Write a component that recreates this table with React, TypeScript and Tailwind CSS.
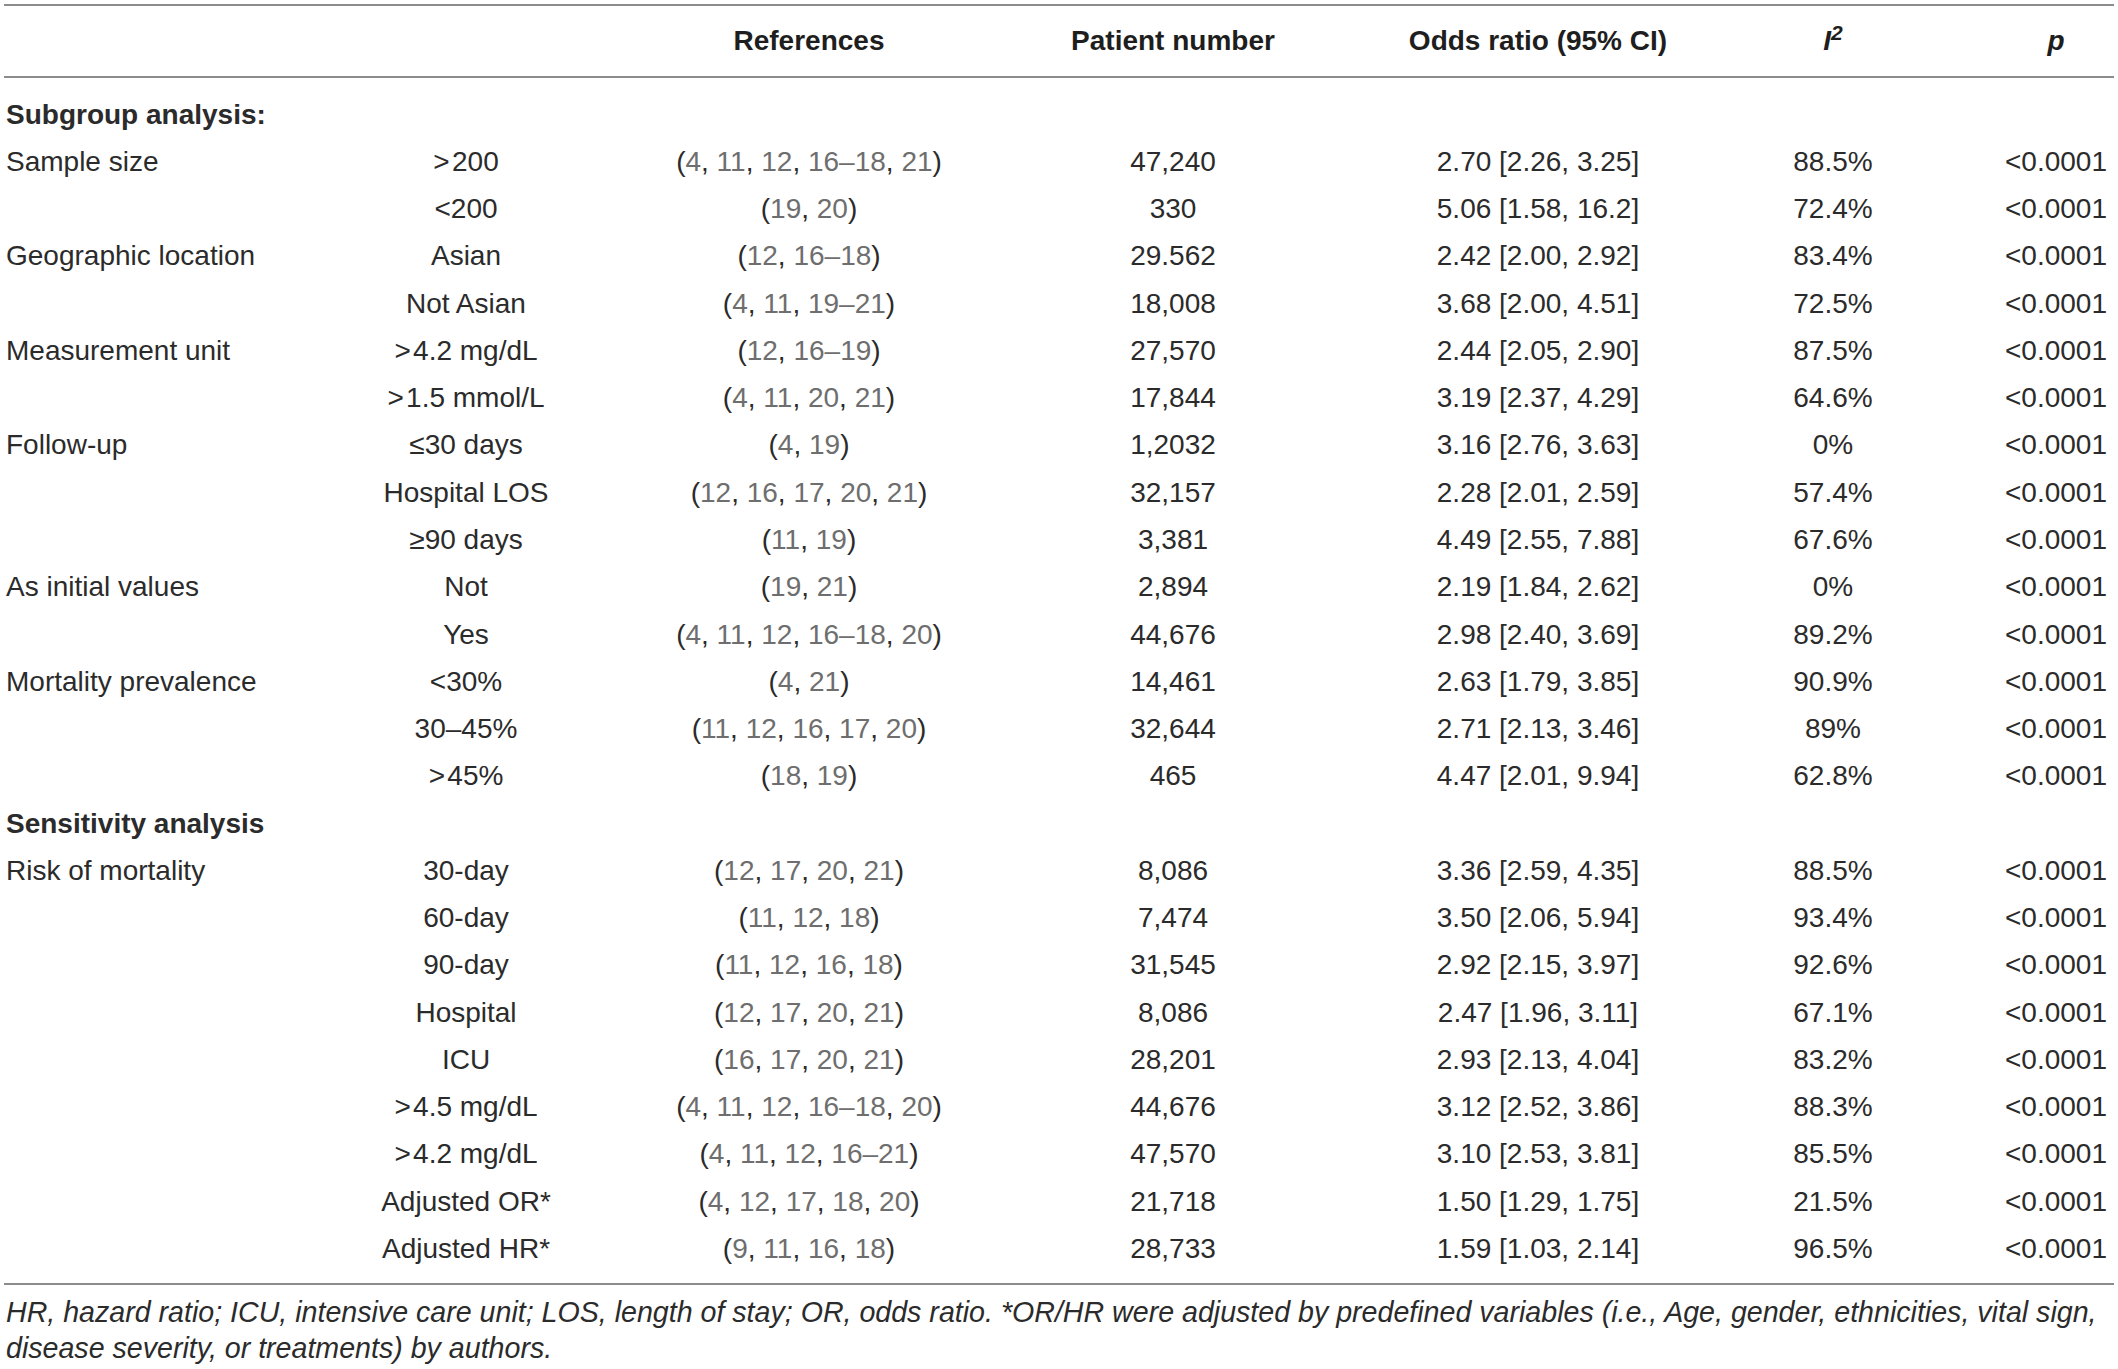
type Row = {
  group?: string;
  sub: string;
  refs: string[];
  n: string;
  or: string;
  i2: string;
  p: string;
};

const subgroup: Row[] = [
  { group: "Sample size", sub: ">\u200A200", refs: ["4", "11", "12", "16–18", "21"], n: "47,240", or: "2.70 [2.26, 3.25]", i2: "88.5%", p: "<0.0001" },
  { sub: "<200", refs: ["19", "20"], n: "330", or: "5.06 [1.58, 16.2]", i2: "72.4%", p: "<0.0001" },
  { group: "Geographic location", sub: "Asian", refs: ["12", "16–18"], n: "29.562", or: "2.42 [2.00, 2.92]", i2: "83.4%", p: "<0.0001" },
  { sub: "Not Asian", refs: ["4", "11", "19–21"], n: "18,008", or: "3.68 [2.00, 4.51]", i2: "72.5%", p: "<0.0001" },
  { group: "Measurement unit", sub: ">\u200A4.2 mg/dL", refs: ["12", "16–19"], n: "27,570", or: "2.44 [2.05, 2.90]", i2: "87.5%", p: "<0.0001" },
  { sub: ">\u200A1.5 mmol/L", refs: ["4", "11", "20", "21"], n: "17,844", or: "3.19 [2.37, 4.29]", i2: "64.6%", p: "<0.0001" },
  { group: "Follow-up", sub: "≤30 days", refs: ["4", "19"], n: "1,2032", or: "3.16 [2.76, 3.63]", i2: "0%", p: "<0.0001" },
  { sub: "Hospital LOS", refs: ["12", "16", "17", "20", "21"], n: "32,157", or: "2.28 [2.01, 2.59]", i2: "57.4%", p: "<0.0001" },
  { sub: "≥90 days", refs: ["11", "19"], n: "3,381", or: "4.49 [2.55, 7.88]", i2: "67.6%", p: "<0.0001" },
  { group: "As initial values", sub: "Not", refs: ["19", "21"], n: "2,894", or: "2.19 [1.84, 2.62]", i2: "0%", p: "<0.0001" },
  { sub: "Yes", refs: ["4", "11", "12", "16–18", "20"], n: "44,676", or: "2.98 [2.40, 3.69]", i2: "89.2%", p: "<0.0001" },
  { group: "Mortality prevalence", sub: "<30%", refs: ["4", "21"], n: "14,461", or: "2.63 [1.79, 3.85]", i2: "90.9%", p: "<0.0001" },
  { sub: "30–45%", refs: ["11", "12", "16", "17", "20"], n: "32,644", or: "2.71 [2.13, 3.46]", i2: "89%", p: "<0.0001" },
  { sub: ">\u200A45%", refs: ["18", "19"], n: "465", or: "4.47 [2.01, 9.94]", i2: "62.8%", p: "<0.0001" },
];

const sensitivity: Row[] = [
  { group: "Risk of mortality", sub: "30-day", refs: ["12", "17", "20", "21"], n: "8,086", or: "3.36 [2.59, 4.35]", i2: "88.5%", p: "<0.0001" },
  { sub: "60-day", refs: ["11", "12", "18"], n: "7,474", or: "3.50 [2.06, 5.94]", i2: "93.4%", p: "<0.0001" },
  { sub: "90-day", refs: ["11", "12", "16", "18"], n: "31,545", or: "2.92 [2.15, 3.97]", i2: "92.6%", p: "<0.0001" },
  { sub: "Hospital", refs: ["12", "17", "20", "21"], n: "8,086", or: "2.47 [1.96, 3.11]", i2: "67.1%", p: "<0.0001" },
  { sub: "ICU", refs: ["16", "17", "20", "21"], n: "28,201", or: "2.93 [2.13, 4.04]", i2: "83.2%", p: "<0.0001" },
  { sub: ">\u200A4.5 mg/dL", refs: ["4", "11", "12", "16–18", "20"], n: "44,676", or: "3.12 [2.52, 3.86]", i2: "88.3%", p: "<0.0001" },
  { sub: ">\u200A4.2 mg/dL", refs: ["4", "11", "12", "16–21"], n: "47,570", or: "3.10 [2.53, 3.81]", i2: "85.5%", p: "<0.0001" },
  { sub: "Adjusted OR*", refs: ["4", "12", "17", "18", "20"], n: "21,718", or: "1.50 [1.29, 1.75]", i2: "21.5%", p: "<0.0001" },
  { sub: "Adjusted HR*", refs: ["9", "11", "16", "18"], n: "28,733", or: "1.59 [1.03, 2.14]", i2: "96.5%", p: "<0.0001" },
];

const grid =
  "grid grid-cols-[248px_428px_258px_470px_260px_330px_116px] items-center";
const cell = "flex justify-center whitespace-nowrap";

function Refs({ refs }: { refs: string[] }) {
  return (
    <span>
      (
      {refs.map((r, i) => (
        <span key={i}>
          <span className="text-[#6e6e6e]">{r}</span>
          {i < refs.length - 1 ? ", " : ""}
        </span>
      ))}
      )
    </span>
  );
}

function DataRow({ row }: { row: Row }) {
  return (
    <div className={`${grid} h-[47.28px]`}>
      <div className="whitespace-nowrap pl-[2px]">{row.group ?? ""}</div>
      <div className={cell}>{row.sub}</div>
      <div className={cell}>
        <Refs refs={row.refs} />
      </div>
      <div className={cell}>{row.n}</div>
      <div className={cell}>{row.or}</div>
      <div className={cell}>{row.i2}</div>
      <div className={cell}>{row.p}</div>
    </div>
  );
}

function Section({ title }: { title: string }) {
  return (
    <div className="flex h-[47.28px] items-center pl-[2px] font-bold whitespace-nowrap">
      {title}
    </div>
  );
}

export default function App() {
  return (
    <div
      className="w-[2118px] h-[1369px] bg-white text-[#2b2b2b] overflow-hidden"
      style={{ fontFamily: '"Liberation Sans", Arial, sans-serif' }}
    >
      <div className="ml-[4px] mr-[4px] pt-[4px] text-[28px]">
        <div className={`${grid} h-[74px] border-t-2 border-b-2 border-[#8c8c8c] font-bold text-[#1e1e1e]`}>
          <div />
          <div />
          <div className={cell}>References</div>
          <div className={cell}>Patient number</div>
          <div className={cell}>Odds ratio (95% CI)</div>
          <div className={cell}>
            <span className="italic">
              I<span className="relative -top-[10px] text-[21px]">2</span>
            </span>
          </div>
          <div className={cell}>
            <span className="italic">p</span>
          </div>
        </div>

        <div className="pt-[13px] pb-[10px] border-b-2 border-[#8c8c8c]">
          <Section title="Subgroup analysis:" />
          {subgroup.map((r, i) => (
            <DataRow key={i} row={r} />
          ))}
          <Section title="Sensitivity analysis" />
          {sensitivity.map((r, i) => (
            <DataRow key={i} row={r} />
          ))}
        </div>

        <div className="pt-[9px] pl-[2px] text-[28.6px] leading-[36px] italic whitespace-nowrap">
          <div>
            HR, hazard ratio; ICU, intensive care unit; LOS, length of stay; OR, odds ratio. *OR/HR were adjusted by predefined variables (i.e., Age, gender, ethnicities, vital sign,
          </div>
          <div>disease severity, or treatments) by authors.</div>
        </div>
      </div>
    </div>
  );
}
